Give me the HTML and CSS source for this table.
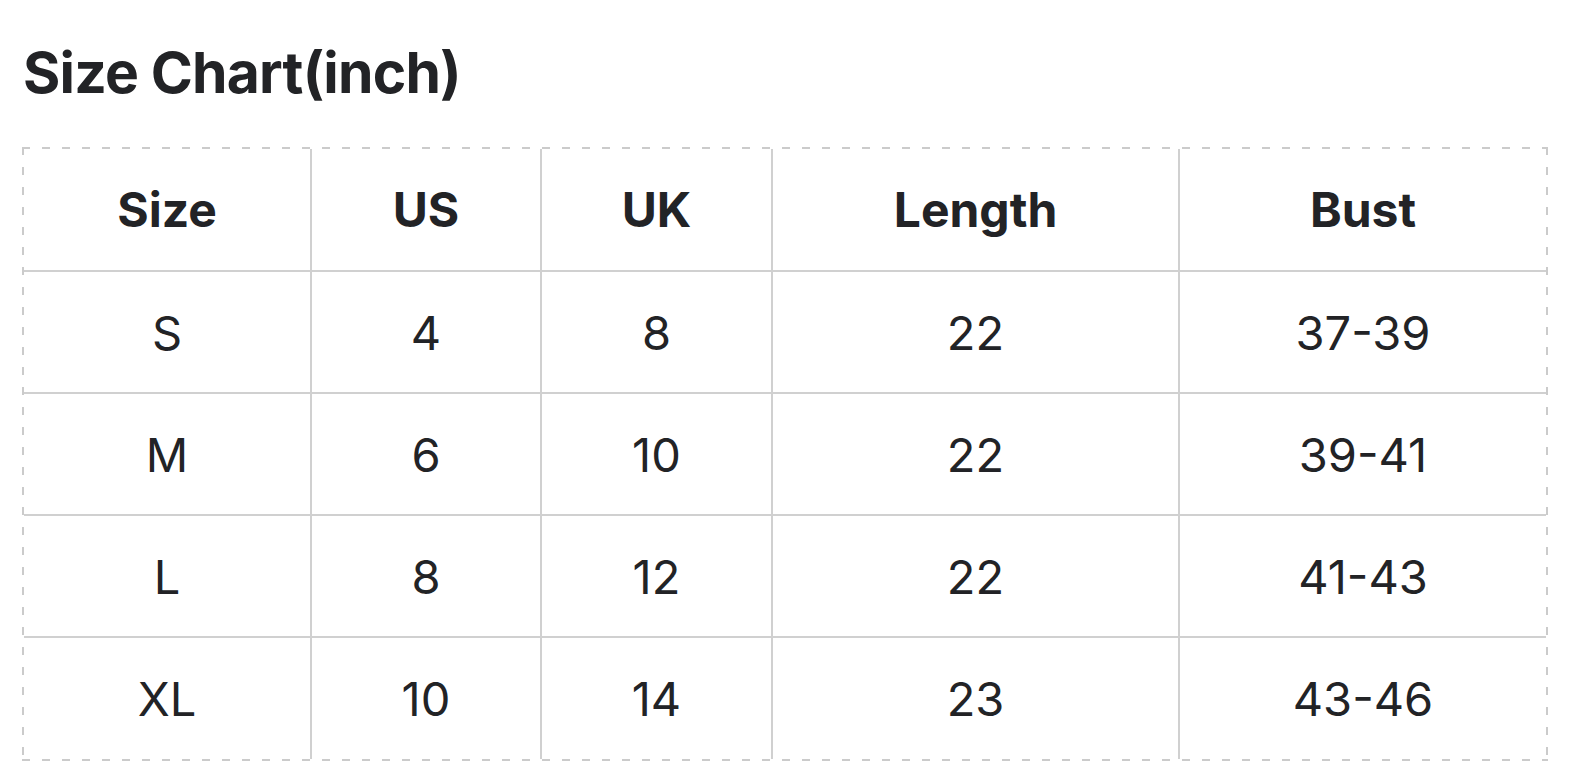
FILE: index.html
```html
<!DOCTYPE html>
<html lang="en">
<head>
<meta charset="utf-8">
<title>Size Chart</title>
<link rel="stylesheet" href="styles.css">
</head>
<body>
<main class="page">
  <h1 class="title">Size Chart(inch)</h1>
  <div class="chart-frame">
    <table class="chart">
      <colgroup>
        <col class="c1"><col class="c2"><col class="c3"><col class="c4"><col class="c5">
      </colgroup>
      <thead>
        <tr><th>Size</th><th>US</th><th>UK</th><th>Length</th><th>Bust</th></tr>
      </thead>
      <tbody>
        <tr><td>S</td><td>4</td><td>8</td><td>22</td><td>37-39</td></tr>
        <tr><td>M</td><td>6</td><td>10</td><td>22</td><td>39-41</td></tr>
        <tr><td>L</td><td>8</td><td>12</td><td>22</td><td>41-43</td></tr>
        <tr><td>XL</td><td>10</td><td>14</td><td>23</td><td>43-46</td></tr>
      </tbody>
    </table>
  </div>
</main>
</body>
</html>
```

FILE: styles.css
```css
html, body {
  margin: 0;
  padding: 0;
  background: #ffffff;
}

body {
  font-family: Inter, "Liberation Sans", sans-serif;
  color: #222326;
}

.page {
  padding: 44px 23px 0 22px;
}

.title {
  margin: 0 0 47px 1px;
  font-size: 57px;
  line-height: 1;
  font-weight: 700;
  letter-spacing: -0.8px;
  height: 56px;
}

.chart-frame {
  width: 1526px;
  box-sizing: border-box;
  padding: 2px;
  background:
    repeating-linear-gradient(90deg, #cbcbcb 0 8px, transparent 8px 20px) top left / 100% 2px no-repeat,
    repeating-linear-gradient(90deg, #cbcbcb 0 8px, transparent 8px 20px) bottom left / 100% 2px no-repeat,
    repeating-linear-gradient(180deg, #cbcbcb 0 8px, transparent 8px 20px) top left / 2px 100% no-repeat,
    repeating-linear-gradient(180deg, #cbcbcb 0 8px, transparent 8px 20px) top right / 2px 100% no-repeat;
}

.chart {
  width: 100%;
  border-collapse: collapse;
  table-layout: fixed;
}

.c1 { width: 287px; }
.c2 { width: 230px; }
.c3 { width: 231px; }
.c4 { width: 407px; }
.c5 { width: auto; }

.chart th,
.chart td {
  height: 120px;
  padding: 0;
  text-align: center;
  vertical-align: middle;
  border: 2px solid #d0d0d0;
  font-size: 47px;
  line-height: 1;
}

.chart th {
  font-weight: 700;
  font-size: 48px;
  height: 121px;
}

.chart td {
  font-weight: 400;
}

.chart thead tr th { border-top: none; }
.chart tbody tr:last-child td { border-bottom: none; height: 121px; }
.chart th:first-child, .chart td:first-child { border-left: none; }
.chart th:last-child, .chart td:last-child { border-right: none; }
```
